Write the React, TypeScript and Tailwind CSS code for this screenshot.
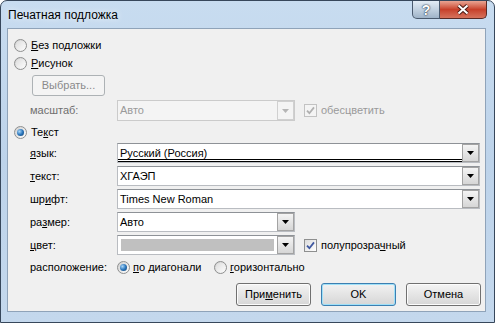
import React from "react";

type Kid = { children?: React.ReactNode };

function Radio({ checked }: { checked?: boolean }) {
  return (
    <span className="flex h-[13px] w-[13px] shrink-0 items-center justify-center rounded-full border border-[#8e8f8f] bg-linear-to-br from-[#cfcfcf] to-[#ffffff]">
      {checked ? (
        <span className="h-[7px] w-[7px] rounded-full bg-radial-[at_35%_35%] from-[#a9d6f7] via-[#2c77bd] to-[#0c3a68]" />
      ) : (
        <span className="h-[9px] w-[9px] rounded-full bg-linear-to-br from-[#dedede] to-[#fbfbfb]" />
      )}
    </span>
  );
}

function Check({ disabled }: { disabled?: boolean }) {
  return (
    <span
      className={
        disabled
          ? "flex h-[13px] w-[13px] shrink-0 items-center justify-center border border-[#c2c2c2] bg-[#f4f4f4]"
          : "flex h-[13px] w-[13px] shrink-0 items-center justify-center border border-[#8e8f8f] bg-linear-to-br from-[#dcdcdc] to-[#ffffff]"
      }
    >
      <svg width="9" height="9" viewBox="0 0 9 9">
        <path
          d="M1 4.6 L3.4 7.2 L8 1.4"
          fill="none"
          stroke={disabled ? "#b0b0b0" : "#3f58a0"}
          strokeWidth="1.8"
        />
      </svg>
    </span>
  );
}

function DropBtn({ disabled }: { disabled?: boolean }) {
  return (
    <span
      className={
        disabled
          ? "flex h-full w-[17px] shrink-0 items-center justify-center border border-[#d0d0d0] bg-[#f4f4f4]"
          : "flex h-full w-[17px] shrink-0 items-center justify-center border border-[#a3a3a3] bg-linear-to-b from-[#f4f4f4] to-[#d6d6d6]"
      }
    >
      <svg width="7" height="4" viewBox="0 0 7 4">
        <path d="M0 0h7L3.5 4z" fill={disabled ? "#b5b5b5" : "#000"} />
      </svg>
    </span>
  );
}

function Combo({ wide, children }: Kid & { wide?: boolean }) {
  return (
    <div
      className={[
        "flex h-[20px] shrink-0 items-stretch border border-[#b9bcc1] border-t-[#8e9297] bg-white",
        wide ? "w-[363px]" : "w-[178px]",
      ].join(" ")}
    >
      {children}
      <DropBtn />
    </div>
  );
}

function Btn({ focused, children }: Kid & { focused?: boolean }) {
  return (
    <div
      className={
        focused
          ? "flex h-[23px] w-[75px] items-center justify-center rounded-[3px] border border-[#3c7fb1] bg-linear-to-b from-[#f2f2f2] to-[#d6d6d6] shadow-[inset_0_0_0_1px_#9fe0f8]"
          : "flex h-[23px] w-[75px] items-center justify-center rounded-[3px] border border-[#707070] bg-linear-to-b from-[#f4f4f4] to-[#d6d6d6] shadow-[inset_0_0_0_1px_#fcfcfc]"
      }
    >
      {children}
    </div>
  );
}

function TitleBar() {
  return (
    <div className="flex h-[27px] shrink-0 items-start justify-between">
      <span className="pl-[7px] pt-[6px] text-[12px] leading-[16px] [text-shadow:0_0_6px_#ffffff]">Печатная подложка</span>
      <div className="mr-[7px] flex h-[18px]">
        <div className="flex w-[28px] items-center justify-center rounded-bl-[5px] border border-t-0 border-[#4a5a6e] bg-linear-to-b from-[#e3ecf5] via-[#c2d1e0] to-[#9fb3c8] text-[14px] font-bold leading-none text-white [text-shadow:0_0_1px_#1f2f44,0_0_2px_#1f2f44]">
          ?
        </div>
        <div className="flex w-[47px] items-center justify-center rounded-br-[5px] border border-l-0 border-t-0 border-[#5a2a25] bg-linear-to-b from-[#e8a493] via-[#c7402a] to-[#d6725c]">
          <svg width="14" height="11" viewBox="0 0 14 11">
            <path d="M2.5 1.5 L11.5 9.5 M11.5 1.5 L2.5 9.5" stroke="#4b1b14" strokeWidth="4" />
            <path d="M2.5 1.5 L11.5 9.5 M11.5 1.5 L2.5 9.5" stroke="#ffffff" strokeWidth="2" />
          </svg>
        </div>
      </div>
    </div>
  );
}

export default function App() {
  return (
    <div className="h-[323px] w-[495px] bg-white font-['Liberation_Sans',Arial,sans-serif] text-[11px] text-black">
      <div className="flex h-full flex-col rounded-t-[7px] border border-[#37475b] bg-linear-to-b from-[#c8dcf0] via-[#bdd3ea] to-[#c4d8ed]">
        <TitleBar />

        {/* клиентская область */}
        <div className="mb-[10px] ml-[6px] mr-[8px] flex flex-1 flex-col border border-[#8fa3b9] bg-[#f0f0f0]">
          <div className="mt-[7px] flex h-[18px] items-center gap-[4px] pl-[6px]">
            <Radio />
            <span>
              <u>Б</u>ез подложки
            </span>
          </div>
          <div className="flex h-[18px] items-center gap-[4px] pl-[6px]">
            <Radio />
            <span>
              <u>Р</u>исунок
            </span>
          </div>
          <div className="mt-[3px] flex h-[21px] pl-[24px]">
            <div className="flex w-[73px] items-center justify-center rounded-[3px] border border-[#adb2b5] bg-[#f4f4f4] text-[#8a8a8a]">
              Выбрать...
            </div>
          </div>
          <div className="mt-[4px] flex h-[21px] items-center pl-[22px]">
            <span className="w-[87px] shrink-0 text-[#6f6f6f]">масштаб:</span>
            <div className="flex h-[21px] w-[178px] shrink-0 items-stretch border border-[#cbcbcb] bg-[#f4f4f4] text-[#9a9a9a]">
              <span className="flex flex-1 items-center pl-[2px]">Авто</span>
              <DropBtn disabled />
            </div>
            <span className="ml-[9px]">
              <Check disabled />
            </span>
            <span className="ml-[4px] text-[#9a9a9a]">обесцветить</span>
          </div>

          <div className="mt-[2px] flex h-[18px] items-center gap-[4px] pl-[6px]">
            <Radio checked />
            <span>
              Те<u>к</u>ст
            </span>
          </div>

          <div className="mt-[2px] flex items-center pl-[22px]">
            <span className="w-[87px] shrink-0">
              <u>я</u>зык:
            </span>
            <Combo wide>
              <span className="relative flex flex-1 items-center pl-[2px]">
                Русский (Россия)
                <span className="absolute inset-x-0 bottom-0 border-b-[3px] border-double border-black" />
              </span>
            </Combo>
          </div>
          <div className="mt-[3px] flex items-center pl-[22px]">
            <span className="w-[87px] shrink-0">
              <u>т</u>екст:
            </span>
            <Combo wide>
              <span className="flex flex-1 items-center pl-[2px]">ХГАЭП</span>
            </Combo>
          </div>
          <div className="mt-[3px] flex items-center pl-[22px]">
            <span className="w-[87px] shrink-0">
              шр<u>и</u>фт:
            </span>
            <Combo wide>
              <span className="flex flex-1 items-center pl-[2px]">Times New Roman</span>
            </Combo>
          </div>
          <div className="mt-[3px] flex items-center pl-[22px]">
            <span className="w-[87px] shrink-0">
              ра<u>з</u>мер:
            </span>
            <Combo>
              <span className="flex flex-1 items-center pl-[2px]">Авто</span>
            </Combo>
          </div>
          <div className="mt-[3px] flex items-center pl-[22px]">
            <span className="w-[87px] shrink-0">
              <u>ц</u>вет:
            </span>
            <Combo>
              <span className="flex flex-1 items-center px-[3px] py-[3px]">
                <span className="h-full w-full bg-[#c0c0c0]" />
              </span>
            </Combo>
            <span className="ml-[9px]">
              <Check />
            </span>
            <span className="ml-[4px]">
              полупрозра<u>ч</u>ный
            </span>
          </div>

          <div className="mt-[3px] flex h-[18px] items-center pl-[22px]">
            <span className="w-[87px] shrink-0">расположение:</span>
            <div className="flex w-[97px] items-center gap-[3px]">
              <Radio checked />
              <span>
                <u>п</u>о диагонали
              </span>
            </div>
            <div className="flex items-center gap-[3px]">
              <Radio />
              <span>
                <u>г</u>оризонтально
              </span>
            </div>
          </div>

          <div className="mt-[7px] flex justify-end gap-[10px] pr-[4px]">
            <Btn>
              При<u>м</u>енить
            </Btn>
            <Btn focused>OK</Btn>
            <Btn>Отмена</Btn>
          </div>
        </div>
      </div>
    </div>
  );
}
